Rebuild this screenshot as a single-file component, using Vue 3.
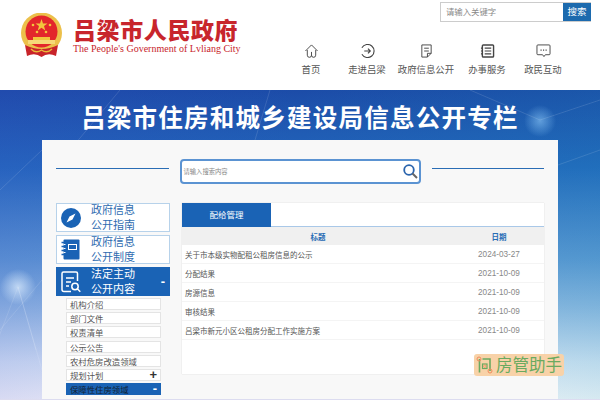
<script setup>
const navItems = [
  { label: '首页', icon: 'home' },
  { label: '走进吕梁', icon: 'enter' },
  { label: '政府信息公开', icon: 'doc' },
  { label: '办事服务', icon: 'list' },
  { label: '政民互动', icon: 'chat' }
]

const subMenu = [
  { label: '机构介绍' },
  { label: '部门文件' },
  { label: '权责清单' },
  { label: '公示公告' },
  { label: '农村危房改造领域' },
  { label: '规划计划', mark: '+' },
  { label: '保障性住房领域', mark: '-', active: true }
]

const rows = [
  { title: '关于市本级实物配租公租房信息的公示', date: '2024-03-27' },
  { title: '分配结果', date: '2021-10-09' },
  { title: '房源信息', date: '2021-10-09' },
  { title: '审核结果', date: '2021-10-09' },
  { title: '吕梁市新元小区公租房分配工作实施方案', date: '2021-10-09' }
]
</script>

<template>
  <div class="page">
    <header class="header">
      <div class="brand">
        <svg class="emblem" width="43" height="44" viewBox="0 0 43 44">
          <circle cx="21.5" cy="20" r="20.5" fill="#ecc04a" />
          <circle cx="21.5" cy="18.5" r="16" fill="#e3262b" />
          <polygon points="21.5,6 23,10.5 27.5,10.5 24,13 25.3,17.4 21.5,14.8 17.7,17.4 19,13 15.5,10.5 20,10.5" fill="#f2c53d" />
          <circle cx="13" cy="12" r="1.3" fill="#f2c53d" />
          <circle cx="30" cy="12" r="1.3" fill="#f2c53d" />
          <circle cx="17" cy="19" r="1.3" fill="#f2c53d" />
          <circle cx="26" cy="19" r="1.3" fill="#f2c53d" />
          <rect x="8" y="27" width="27" height="4" fill="#f6d878" />
          <rect x="13" y="24" width="17" height="3" fill="#f2c53d" />
          <path d="M5 32 Q21.5 40 38 32 L36 43 Q28 39 21.5 44 Q15 39 7 43 Z" fill="#c8242a" />
          <path d="M11 36 Q16 41 21.5 37 Q27 41 32 36" stroke="#e9b93a" stroke-width="1.4" fill="none" />
        </svg>
        <div class="brand-text">
          <div class="brand-cn">吕梁市人民政府</div>
          <div class="brand-en">The People's Government of Lvliang City</div>
        </div>
      </div>

      <div class="header-right">
        <div class="top-search">
          <span class="top-input">请输入关键字</span>
          <span class="top-btn">搜索</span>
        </div>
        <nav class="nav">
          <div v-for="item in navItems" :key="item.label" class="nav-item">
            <svg width="15" height="14" viewBox="0 0 16 15" fill="none" stroke="#444" stroke-width="1">
              <template v-if="item.icon === 'home'">
                <path d="M1.5 7.5 L8 1 L14.5 7.5" />
                <path d="M3.5 6.5 V12 A2.2 2.2 0 0 0 8 12 A2.2 2.2 0 0 0 12.5 12 V6.5" />
                <path d="M8 8.5 V12" />
              </template>
              <template v-else-if="item.icon === 'enter'">
                <path d="M2 4 A7 7 0 1 1 2 11" stroke-width="1.2" />
                <path d="M4.5 7.5 H11 M8.5 5 L11 7.5 L8.5 10" stroke-width="1.2" />
              </template>
              <template v-else-if="item.icon === 'doc'">
                <path d="M3 1 H13 V10 L9 14 H3 Z M9 14 V10 H13 M5.5 4.5 H10.5 M5.5 7.5 H10.5" />
              </template>
              <template v-else-if="item.icon === 'list'">
                <rect x="2.5" y="1" width="12" height="13" rx="1" stroke-width="1.5" />
                <path d="M5 4.5 H12 M5 7.5 H12 M5 10.5 H12 M1 4.5 H3 M1 7.5 H3 M1 10.5 H3" stroke-width="1.3" />
              </template>
              <template v-else>
                <path d="M2 1 H14 Q15 1 15 2 V10.5 Q15 11.5 14 11.5 H10 L8.5 13.5 L7 11.5 H2 Q1 11.5 1 10.5 V2 Q1 1 2 1 Z" />
                <path d="M4.8 6.5 H6 M7.5 6.5 H8.7 M10.2 6.5 H11.4" stroke-width="1.4" />
              </template>
            </svg>
            <span>{{ item.label }}</span>
          </div>
        </nav>
      </div>
    </header>

    <section class="hero">
      <svg class="hero-lines" width="600" height="310" viewBox="0 0 600 310" fill="none" stroke="#fff" stroke-opacity="0.12">
        <path d="M0 100 L42 60 M120 0 L70 60 M0 240 L42 190" />
        <path d="M558 75 L600 60 M470 0 L540 30 L600 10 M270 0 L255 50" />
        <path d="M18 197 L-10 270 M18 197 L42 280 M18 197 L36 260" />
      </svg>
      <h1 class="hero-title">吕梁市住房和城乡建设局信息公开专栏</h1>
      <div class="card">
        <div class="search-row">
          <div class="line"></div>
          <div class="search-box">
            <span>请输入搜索内容</span>
            <svg width="15" height="15" viewBox="0 0 15 15" fill="none">
              <circle cx="6" cy="6" r="4.8" stroke="#2a64ad" stroke-width="1.8" />
              <path d="M9.5 9.5 L14 14" stroke="#666" stroke-width="2" />
            </svg>
          </div>
          <div class="line"></div>
        </div>

        <div class="columns">
          <aside class="side">
            <div class="side-tile">
              <svg width="20" height="20" viewBox="0 0 20 20">
                <circle cx="10" cy="10" r="10" fill="#1a63b5" />
                <path d="M14.5 5.5 L11.5 11.5 L5.5 14.5 L8.5 8.5 Z" fill="#fff" />
              </svg>
              <span>政府信息<br />公开指南</span>
            </div>
            <div class="side-tile">
              <svg width="20" height="21" viewBox="0 0 20 21">
                <rect x="2.5" y="0.5" width="16" height="20" rx="1" fill="#1a63b5" />
                <rect x="7.5" y="5.5" width="8" height="5" fill="none" stroke="#fff" stroke-width="1" />
                <path d="M0.5 3.5 H4.5 M0.5 7.5 H4.5 M0.5 11.5 H4.5 M0.5 15.5 H4.5" stroke="#1a63b5" stroke-width="1.4" />
                <path d="M2.5 5.5 H4.5 M2.5 9.5 H4.5 M2.5 13.5 H4.5" stroke="#fff" stroke-width="1" />
              </svg>
              <span>政府信息<br />公开制度</span>
            </div>
            <div class="side-tile active">
              <svg width="20" height="22" viewBox="0 0 20 22" fill="none" stroke="#fff" stroke-width="1.5">
                <path d="M10 20.5 H3 Q1 20.5 1 18.5 V2.5 Q1 1 2.5 1 H15 Q16.5 1 16.5 2.5 V10" />
                <path d="M5 7 H13 M5 11 H10 M5 15 H8" />
                <circle cx="14" cy="15.5" r="3.2" />
                <path d="M16.3 17.8 L19.3 20.8" />
              </svg>
              <span>法定主动<br />公开内容</span>
              <b class="tile-mark">-</b>
            </div>
            <ul class="sub-menu">
              <li v-for="sub in subMenu" :key="sub.label" :class="{ active: sub.active }">
                <span>{{ sub.label }}</span>
                <b v-if="sub.mark">{{ sub.mark }}</b>
              </li>
            </ul>
          </aside>

          <div class="main">
            <div class="tabs"><div class="tab">配给管理</div></div>
            <div class="table-head">
              <span class="col-title">标题</span>
              <span class="col-date">日期</span>
            </div>
            <div v-for="row in rows" :key="row.title" class="table-row">
              <span class="col-title">{{ row.title }}</span>
              <span class="col-date">{{ row.date }}</span>
            </div>
          </div>
        </div>
      </div>

      <div class="watermark">
        <svg width="18" height="18" viewBox="0 0 18 18" fill="none">
          <path d="M3.5 3 V16.5 M6.5 3 H14 V15" stroke="#6aaa60" stroke-width="1.6" />
          <rect x="6.5" y="8" width="4.5" height="4.5" stroke="#6aaa60" stroke-width="1.2" />
          <circle cx="8.8" cy="10.2" r="1.2" stroke="#ef8c5c" stroke-width="0.8" />
          <circle cx="3" cy="3" r="2" stroke="#ef8c5c" stroke-width="1" />
          <circle cx="14" cy="15" r="2" stroke="#ef8c5c" stroke-width="1" />
        </svg>
        <span>房管助手</span>
      </div>
    </section>
  </div>
</template>

<style>
html, body {
  margin: 0;
  overflow: hidden;
}
</style>

<style scoped>
.page {
  width: 600px;
  height: 400px;
  overflow: hidden;
  font-family: "Liberation Sans", "Noto Sans CJK SC", sans-serif;
  color: #444;
}

.header {
  height: 90px;
  display: flex;
  justify-content: space-between;
  background: #fff;
}

.brand {
  display: flex;
  align-items: flex-start;
  gap: 10px;
  padding: 13px 0 0 20px;
}

.brand-text {
  margin-top: 3px;
}

.brand-cn {
  font-family: "Noto Sans CJK SC", sans-serif;
  font-weight: 900;
  font-size: 23px;
  line-height: 26px;
  letter-spacing: 0.6px;
  color: #c8252c;
}

.brand-en {
  font-family: "Liberation Serif", serif;
  font-size: 10px;
  line-height: 14px;
  color: #c8252c;
}

.header-right {
  display: flex;
  flex-direction: column;
  align-items: flex-end;
  padding: 2px 9px 0 0;
}

.top-search {
  display: flex;
  height: 20px;
  box-sizing: border-box;
  border: 1px solid #ccc;
  border-right: 0;
}

.top-input {
  width: 122px;
  padding-left: 5px;
  box-sizing: border-box;
  line-height: 18px;
  font-size: 8.4px;
  color: #888;
}

.top-btn {
  width: 28px;
  background: #1c6aae;
  color: #fff;
  text-align: center;
  line-height: 18px;
  font-size: 9.5px;
}

.nav {
  display: flex;
  margin-top: 22px;
  margin-right: 22px;
}

.nav-item {
  display: flex;
  flex-direction: column;
  align-items: center;
  gap: 4.5px;
  font-size: 9.4px;
  line-height: 13px;
  width: 56px;
  color: #555;
}

.nav-item:nth-child(3) {
  width: 62px;
}

.nav-item:nth-child(4) {
  width: 60px;
}

.nav-item:nth-child(5) {
  width: 52px;
}

.hero {
  position: relative;
  height: 310px;
  box-sizing: border-box;
  border-bottom: 1px solid #dcdcf0;
  background:
    radial-gradient(circle at 540px 31px, rgba(150, 210, 255, 0.55) 0, rgba(150, 210, 255, 0) 16px),
    radial-gradient(circle at 18px 197px, rgba(225, 240, 255, 0.7) 0, rgba(225, 240, 255, 0) 18px),
    linear-gradient(90deg, rgba(60, 70, 200, 0.16) 0%, rgba(60, 70, 200, 0) 50%, rgba(20, 150, 180, 0.14) 100%),
    linear-gradient(180deg, #1c4ca8 0%, #2368bd 25%, #5e98d4 55%, #8fb8e2 70%, #d5e4f5 88%, #f6f7fb 100%);
  overflow: hidden;
}

.hero-lines {
  position: absolute;
  left: 0;
  top: 0;
}

.hero-title {
  position: relative;
  margin: 0;
  padding-top: 10px;
  height: 40px;
  text-align: center;
  font-family: "Noto Sans CJK SC", sans-serif;
  font-size: 24.5px;
  line-height: 34px;
  font-weight: 700;
  letter-spacing: 1.25px;
  color: #fff;
}

.card {
  position: relative;
  width: 516px;
  height: 259px;
  margin-left: 42px;
  padding: 19px 14px 0;
  box-sizing: border-box;
  background: #f8f8f8;
}

.search-row {
  display: flex;
  align-items: center;
  gap: 11px;
}

.line {
  flex: 1;
  height: 1px;
  background: #2a6db5;
  margin-top: -6px;
}

.search-box {
  width: 241px;
  height: 25px;
  box-sizing: border-box;
  display: flex;
  align-items: center;
  justify-content: space-between;
  padding: 0 1px 0 2px;
  border: 2px solid #5b93d2;
  border-radius: 4px;
  background: #fff;
  font-size: 6.3px;
  color: #888;
}

.columns {
  display: flex;
  gap: 12px;
  margin-top: 19px;
}

.side {
  width: 114px;
  flex-shrink: 0;
}

.side-tile {
  position: relative;
  height: 29px;
  box-sizing: border-box;
  margin-bottom: 3px;
  display: flex;
  align-items: center;
  gap: 10px;
  padding-left: 4px;
  border: 1px solid #b7d2ea;
  background: #fff;
  font-size: 11px;
  line-height: 15px;
  color: #2f6cb0;
}

.side-tile svg {
  flex-shrink: 0;
}

.side-tile.active {
  background: #1a63b5;
  border-color: #1a63b5;
  color: #fff;
  margin-bottom: 0;
}

.tile-mark {
  position: absolute;
  right: 4px;
  top: 6px;
  font-size: 13px;
}

.sub-menu {
  list-style: none;
  margin: 2px 0 0 10px;
  padding: 0;
  width: 95px;
  font-size: 8.4px;
  color: #555;
}

.sub-menu li {
  height: 12px;
  box-sizing: border-box;
  margin-bottom: 2.2px;
  padding: 0 3px;
  display: flex;
  justify-content: space-between;
  align-items: center;
  border: 1px solid #e4e4e4;
  background: #fff;
}

.sub-menu li b {
  font-size: 13px;
  line-height: 10px;
  color: #333;
}

.sub-menu li.active {
  background: #1a63b5;
  border-color: #1a63b5;
  color: #123;
}

.sub-menu li.active b {
  color: #fff;
}

.main {
  width: 362px;
  height: 171px;
  background: #fff;
  box-sizing: border-box;
  box-shadow: 0 0 1px #c8c8c8;
  font-size: 7.5px;
}

.tabs {
  height: 24px;
  box-sizing: border-box;
  border-bottom: 1px solid #a9c8e8;
}

.tab {
  width: 89px;
  height: 24px;
  line-height: 24px;
  text-align: center;
  background: #1a63b5;
  color: #fff;
  font-size: 8.5px;
}

.table-head {
  height: 18px;
  display: flex;
  align-items: center;
  background: #f0f0f0;
  color: #2a6db5;
  font-weight: 700;
}

.table-head .col-title {
  padding-left: 0;
  text-align: center;
}

.table-row {
  height: 19px;
  box-sizing: border-box;
  display: flex;
  align-items: center;
  border-bottom: 1px solid #f4f4f4;
  color: #555;
}

.col-title {
  flex: 1;
  padding-left: 3px;
}

.col-date {
  width: 90px;
  text-align: center;
}

.table-row .col-date {
  font-size: 8.2px;
  color: #888;
}

.watermark {
  position: absolute;
  right: 36px;
  bottom: 23px;
  width: 90px;
  height: 22px;
  display: flex;
  align-items: center;
  gap: 2px;
  padding-left: 2px;
  box-sizing: border-box;
  background: #f8d2a8;
  border-radius: 3px;
  color: #6aaa60;
  font-size: 16.5px;
  line-height: 22px;
  white-space: nowrap;
}
</style>
